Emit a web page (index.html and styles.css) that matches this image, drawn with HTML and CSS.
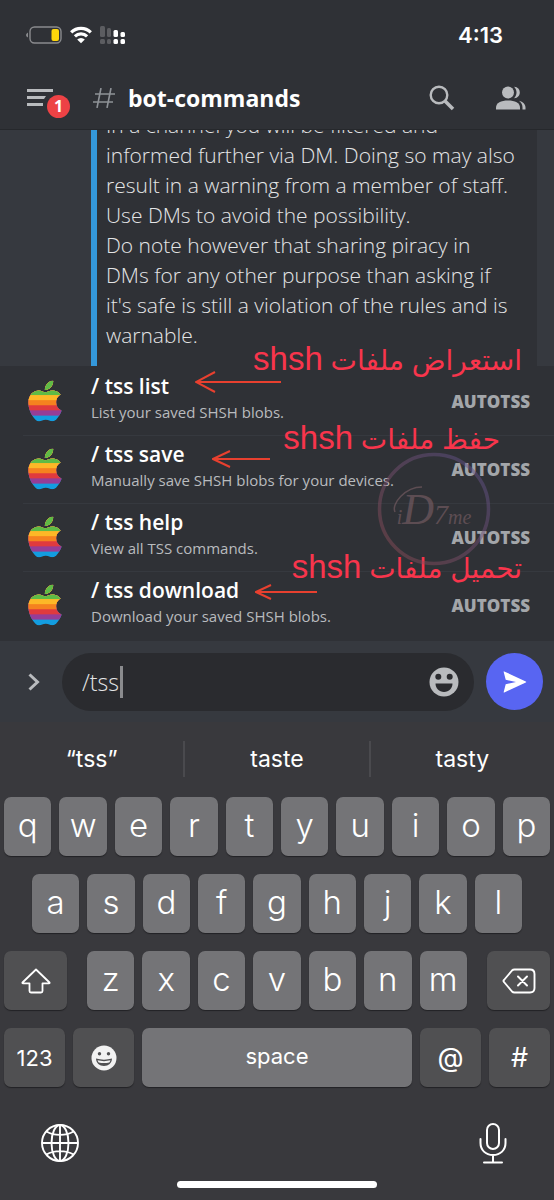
FILE: index.html
```
<!DOCTYPE html>
<html lang="en">
<head>
  <meta charset="UTF-8" />
  <meta name="viewport" content="width=device-width, initial-scale=1.0"/>
  <title>bot-commands</title>
  <link rel="stylesheet" href="styles.css">
</head>
<body>
  <svg class="defs" width="0" height="0" aria-hidden="true">
    <defs>
      <clipPath id="apple-shape">
        <path d="M12.152 6.896c-.948 0-2.415-1.078-3.96-1.04-2.04.027-3.91 1.183-4.961 3.014-2.117 3.675-.546 9.103 1.519 12.09 1.013 1.454 2.208 3.09 3.792 3.039 1.52-.065 2.09-.987 3.935-.987 1.831 0 2.35.987 3.96.948 1.637-.026 2.676-1.48 3.676-2.948 1.156-1.688 1.636-3.325 1.662-3.415-.039-.013-3.182-1.221-3.22-4.857-.026-3.04 2.48-4.494 2.597-4.559-1.429-2.09-3.623-2.324-4.39-2.376-2-.156-3.675 1.09-4.61 1.09zM15.53 3.83c.843-1.012 1.4-2.427 1.245-3.83-1.207.052-2.662.805-3.532 1.818-.78.896-1.454 2.338-1.273 3.714 1.338.104 2.715-.688 3.559-1.701"/>
      </clipPath>
      <symbol id="apple" viewBox="2 0 20 24">
        <g clip-path="url(#apple-shape)">
          <rect width="24" height="24" fill="#139de0"/>
          <rect width="24" height="20.6" fill="#963d97"/>
          <rect width="24" height="17.5" fill="#e03a3e"/>
          <rect width="24" height="14.5" fill="#f5821f"/>
          <rect width="24" height="11.5" fill="#fdb827"/>
          <rect width="24" height="8.5" fill="#5ebb46"/>
        </g>
      </symbol>
    </defs>
  </svg>

  <div class="phone">
    <div class="status">
      <div class="status-icons">
        <svg width="36" height="18" viewBox="0 0 36 18">
          <path d="M2 6.500Q0 7.500 0 9T2 11.500Z" fill="#8a8b8e"/>
          <rect x="4" y="1" width="31" height="16" rx="4.500" fill="none" stroke="#8a8b8e" stroke-width="1.400"/>
          <rect x="25.500" y="3" width="7.500" height="12" rx="2" fill="#ffd60a"/>
        </svg>
        <svg width="22" height="18" viewBox="0 0 22 18" fill="none" stroke="#fff" stroke-width="3.200">
          <path d="M1.200 6.300a14 14 0 0 1 19.600 0"/>
          <path d="M4.900 10.400a8.800 8.800 0 0 1 12.200 0"/>
          <path d="M11 17.200 7.200 13.500a5.400 5.400 0 0 1 7.600 0Z" fill="#fff" stroke="none"/>
        </svg>
        <svg width="26" height="18" viewBox="0 0 26 18" fill="#fff">
          <g fill="#5c5d61">
            <rect x="0" y="0" width="5" height="11" rx="1.500"/>
            <rect x="7" y="2" width="4" height="9" rx="1.500"/>
            <rect x="0" y="13" width="5" height="5" rx="1.500"/>
            <rect x="7" y="13" width="4" height="5" rx="1.500"/>
          </g>
          <rect x="13.500" y="4" width="4.500" height="7" rx="1.500"/>
          <rect x="20.500" y="6" width="4.500" height="5" rx="1.500"/>
          <rect x="13.500" y="13" width="4.500" height="5" rx="1.500"/>
          <rect x="20.500" y="13" width="4.500" height="5" rx="1.500"/>
        </svg>
      </div>
      <span class="time">4:13</span>
    </div>

    <header class="header">
      <button class="icon-btn menu" aria-label="Menu">
        <svg width="26" height="18" viewBox="0 0 26 18" fill="#b9bbbe">
          <path d="M0 0h26v3H0zM0 7h19l-2 3H0zM0 14h16v3H0z"/>
        </svg>
        <span class="badge">1</span>
      </button>
      <svg class="hash" width="22" height="20" viewBox="0 0 22 20" fill="none" stroke="#8e9297" stroke-width="1.600">
        <path d="M8 0 4 20M18 0l-4 20M2 6h20M0 14h20"/>
      </svg>
      <h1>bot-commands</h1>
      <button class="icon-btn" aria-label="Search">
        <svg width="26" height="26" viewBox="0 0 26 26" fill="none" stroke="#b9bbbe">
          <circle cx="10" cy="10" r="8.300" stroke-width="2.400"/>
          <path d="m16 16 8 8" stroke-width="3.600"/>
        </svg>
      </button>
      <button class="icon-btn" aria-label="Members">
        <svg width="30" height="24" viewBox="0 0 30 24" fill="#b9bbbe">
          <circle cx="12" cy="6.500" r="6"/>
          <path d="M0 23.500v-2C0 17 5 14.500 12 14.500s12 2.500 12 7v2z"/>
          <path d="M18 .800c4 .200 5.800 2.800 5.800 5.700S22 12 18 12.200c3.400-3 3.400-8.400 0-11.400Z"/>
          <path d="M23 14.800c4 1 6.500 3.500 6.500 6.700v2h-3v-2c0-2.700-1.200-5-3.500-6.700Z"/>
        </svg>
      </button>
    </header>

    <main class="messages">
      <div class="embed">
        In a channel you will be filtered and<br>
        informed further via DM. Doing so may also<br>
        result in a warning from a member of staff.<br>
        Use DMs to avoid the possibility.<br>
        Do note however that sharing piracy in<br>
        DMs for any other purpose than asking if<br>
        it's safe is still a violation of the rules and is<br>
        warnable.
      </div>
    </main>

    <ul class="commands">
      <li>
        <button class="command">
          <svg class="avatar" width="34" height="42"><use href="#apple"/></svg>
          <span class="info">
            <strong>/ tss list</strong>
            <span class="desc">List your saved SHSH blobs.</span>
          </span>
          <span class="app">AUTOTSS</span>
        </button>
        <svg class="arrow arrow-list" width="86" height="22" viewBox="0 0 86 22"><path d="M86 11H1M20 1 1 11l19 10"/></svg>
        <span class="note note-list" lang="ar" dir="rtl">استعراض ملفات <span class="latin">shsh</span></span>
      </li>
      <li>
        <button class="command">
          <svg class="avatar" width="34" height="42"><use href="#apple"/></svg>
          <span class="info">
            <strong>/ tss save</strong>
            <span class="desc">Manually save SHSH blobs for your devices.</span>
          </span>
          <span class="app">AUTOTSS</span>
        </button>
        <svg class="arrow arrow-save" width="58" height="18" viewBox="0 0 58 18"><path d="M58 9H1M18 1 1 9l17 8"/></svg>
        <span class="note note-save" lang="ar" dir="rtl">حفظ ملفات <span class="latin">shsh</span></span>
      </li>
      <li>
        <button class="command">
          <svg class="avatar" width="34" height="42"><use href="#apple"/></svg>
          <span class="info">
            <strong>/ tss help</strong>
            <span class="desc">View all TSS commands.</span>
          </span>
          <span class="app">AUTOTSS</span>
        </button>
      </li>
      <li>
        <button class="command">
          <svg class="avatar" width="34" height="42"><use href="#apple"/></svg>
          <span class="info">
            <strong>/ tss download</strong>
            <span class="desc">Download your saved SHSH blobs.</span>
          </span>
          <span class="app">AUTOTSS</span>
        </button>
        <svg class="arrow arrow-download" width="62" height="16" viewBox="0 0 62 16"><path d="M62 8H1M16 1 1 8l15 7"/></svg>
        <span class="note note-download" lang="ar" dir="rtl">تحميل ملفات <span class="latin">shsh</span></span>
      </li>
      <li class="watermark" aria-hidden="true">
        <svg width="114" height="114" viewBox="0 0 114 114" fill="none">
          <defs>
            <linearGradient id="ring" x1="0" y1="1" x2="1" y2="0">
              <stop offset="0" stop-color="#8c4a4e"/>
              <stop offset="1" stop-color="#5c5390"/>
            </linearGradient>
          </defs>
          <circle cx="57" cy="57" r="54.500" stroke="url(#ring)" stroke-width="3.500"/>
          <path d="M18 60C14 52 28 35 45 35" stroke="#8c6a70" stroke-width="1.500"/>
        </svg>
        <span class="sign">i<span class="sign-big">D</span><span class="sign-mid">7</span>me</span>
      </li>
    </ul>

    <form class="composer" onsubmit="return false">
      <button class="icon-btn more" type="button" aria-label="More">
        <svg width="12" height="18" viewBox="0 0 12 18" fill="none" stroke="#b9bbbe" stroke-width="3"><path d="m1.500 1.500 8 7.500-8 7.500"/></svg>
      </button>
      <div class="field">
        <input type="text" value="/tss" aria-label="Message">
        <span class="caret"></span>
        <button class="icon-btn" type="button" aria-label="Emoji">
          <svg width="30" height="30" viewBox="0 0 30 30">
            <circle cx="15" cy="15" r="14.500" fill="#b9bbbe"/>
            <circle cx="9.300" cy="9.800" r="3" fill="#2a2b2f"/>
            <circle cx="20.700" cy="9.800" r="3" fill="#2a2b2f"/>
            <path d="M6.500 16.500h17c0 4.800-3.500 8.500-8.500 8.500s-8.500-3.700-8.500-8.500Z" fill="#2a2b2f"/>
          </svg>
        </button>
      </div>
      <button class="send" aria-label="Send">
        <svg width="24" height="22" viewBox="0 0 24 22" fill="#fff"><path d="M1.200.400Q.500.200.700 1l2 7.800L13 11 2.700 13.200.700 21q-.200.900.600.500L22.800 11.500q.900-.500 0-1Z"/></svg>
      </button>
    </form>

    <section class="keyboard">
      <div class="suggestions">
        <button>“tss”</button>
        <button>taste</button>
        <button>tasty</button>
      </div>
      <div class="keys">
        <div class="row">
          <button>q</button><button>w</button><button>e</button><button>r</button><button>t</button><button>y</button><button>u</button><button>i</button><button>o</button><button>p</button>
        </div>
        <div class="row row-middle">
          <button>a</button><button>s</button><button>d</button><button>f</button><button>g</button><button>h</button><button>j</button><button>k</button><button>l</button>
        </div>
        <div class="row row-split">
          <button class="dark wide" aria-label="Shift">
            <svg width="30" height="26" viewBox="0 0 30 26" fill="none" stroke="#fff" stroke-width="1.800" stroke-linejoin="round"><path d="M15 1.500 1.500 14.500q-.500.800.500.800h6.500V23q0 1.500 1.500 1.500h10q1.500 0 1.500-1.500v-7.700H28q1 0 .500-.800Z"/></svg>
          </button>
          <div class="letters">
            <button>z</button><button>x</button><button>c</button><button>v</button><button>b</button><button>n</button><button>m</button>
          </div>
          <button class="dark wide" aria-label="Delete">
            <svg width="34" height="26" viewBox="0 0 34 26" fill="none" stroke="#fff" stroke-width="1.900" stroke-linecap="round" stroke-linejoin="round"><path d="M12.500 1.500H28q4.500 0 4.500 4.500v14q0 4.500-4.500 4.500H12.500q-1.500 0-2.500-1L2 14q-1-1 0-2l8-9.500q1-1 2.500-1ZM16 8.500l9 9m0-9-9 9"/></svg>
          </button>
        </div>
        <div class="row">
          <button class="dark fn label">123</button>
          <button class="dark fn" aria-label="Emoji keyboard">
            <svg width="26" height="26" viewBox="0 0 26 26">
              <circle cx="13" cy="13" r="12.500" fill="#f2f2f2"/>
              <circle cx="8.500" cy="8.800" r="1.700" fill="#505052"/>
              <circle cx="17.500" cy="8.800" r="1.700" fill="#505052"/>
              <path d="M5 13.500c5 1.500 11 1.500 16 0 0 4.500-3.500 7.500-8 7.500s-8-3-8-7.500Z" fill="#505052"/>
              <path d="M6.500 15.300c4 1.100 9 1.100 13 0-.300 1-.700 1.700-1.200 2.200-3.500.800-7.100.800-10.600 0-.500-.500-.900-1.200-1.200-2.200Z" fill="#f2f2f2"/>
            </svg>
          </button>
          <button class="space label">space</button>
          <button class="dark fn symbol">@</button>
          <button class="dark fn symbol">#</button>
        </div>
      </div>
      <div class="bottom">
        <button class="icon-btn" aria-label="Next keyboard">
          <svg width="40" height="40" viewBox="0 0 40 40" fill="none" stroke="#fff" stroke-width="1.900">
            <circle cx="20" cy="20" r="18"/>
            <ellipse cx="20" cy="20" rx="8.500" ry="18"/>
            <path d="M20 2v36M2 20h36M6.500 8.500c7.500 4.500 19.500 4.500 27 0M6.500 31.500c7.500-4.500 19.500-4.500 27 0"/>
          </svg>
        </button>
        <button class="icon-btn" aria-label="Dictate">
          <svg width="28" height="42" viewBox="0 0 28 42" fill="none" stroke="#fff" stroke-width="2" stroke-linecap="round">
            <rect x="8" y="2" width="12" height="25" rx="6"/>
            <path d="M1.500 17v4c0 7 5 12 12.500 12s12.500-5 12.500-12v-4M14 33v7M5 40.500h18"/>
          </svg>
        </button>
      </div>
      <div class="home-bar"></div>
    </section>
  </div>
</body>
</html>
```

FILE: styles.css
```
* {
  box-sizing: border-box;
}

body {
  margin: 0;
  background: #2f3136;
  color: #fff;
  font-family: "Open Sans", "Noto Sans", sans-serif;
}

button {
  border: none;
  padding: 0;
  background: none;
  color: inherit;
  font-family: inherit;
  cursor: pointer;
}

svg {
  display: block;
}

.defs {
  position: absolute;
}

.phone {
  display: flex;
  flex-direction: column;
  min-height: 100vh;
}

.icon-btn {
  display: flex;
  align-items: center;
}

/* status bar */
.status {
  display: flex;
  align-items: center;
  justify-content: space-between;
  height: 70px;
  padding: 0 51px 0 26px;
  font-family: Inter, sans-serif;
}

.status-icons {
  display: flex;
  gap: 8px;
}

.time {
  font-size: 22px;
  font-weight: 600;
}

/* channel header */
.header {
  display: flex;
  align-items: center;
  height: 60px;
  padding: 0 28px 4px 27px;
  border-bottom: 1px solid #26282c;
}

.menu {
  position: relative;
}

.badge {
  position: absolute;
  left: 20px;
  top: 6px;
  width: 23px;
  height: 23px;
  border-radius: 50%;
  background: #ed4245;
  font-size: 16px;
  font-weight: 700;
  line-height: 23px;
}

.hash {
  margin-left: 40px;
}

.header h1 {
  flex: 1;
  margin: 0 0 0 13px;
  font-size: 23px;
  font-weight: 700;
}

.header .icon-btn + .icon-btn {
  margin-left: 41px;
}

/* messages */
.messages {
  flex: 1 1 0;
  display: flex;
  flex-direction: column;
  justify-content: flex-end;
  overflow: hidden;
  padding: 0 17px 0 91px;
  background: #36393f;
}

.embed {
  padding: 0 0 16px 9px;
  border-left: 6px solid #3498db;
  background: #2f3136;
  color: #e4e5e6;
  font-size: 21px;
  font-weight: 300;
  line-height: 30px;
  white-space: nowrap;
}

/* slash command list */
.commands {
  position: relative;
  margin: 0;
  padding: 1px 0 2px;
  list-style: none;
}

.commands li {
  position: relative;
}

.command {
  display: flex;
  align-items: center;
  width: 100%;
  height: 68px;
  padding: 0 24px 0 28px;
  text-align: left;
}

.commands li + li::before {
  content: "";
  position: absolute;
  left: 23px;
  right: 0;
  border-top: 1px solid #36393f;
}

.info {
  flex: 1;
  display: flex;
  flex-direction: column;
  margin-left: 29px;
  padding-bottom: 6px;
}

.info strong {
  font-size: 21px;
  font-weight: 600;
  line-height: 28px;
}

.desc {
  color: #b9bbbe;
  font-size: 15px;
  line-height: 24px;
}

.app {
  color: #a3a6aa;
  font-size: 17px;
  font-weight: 800;
}

/* red notes drawn over the list */
.note {
  position: absolute;
  color: #f8354c;
  font-family: "Liberation Sans", "DejaVu Sans", sans-serif;
  font-size: 28px;
  line-height: 40px;
  white-space: nowrap;
}

.latin {
  font-size: 33px;
}

.note-list {
  right: 32px;
  top: -28px;
}

.note-save {
  right: 54px;
  top: -17px;
}

.note-download {
  right: 32px;
  top: -24px;
}

.arrow {
  position: absolute;
  fill: none;
  stroke: #e8402f;
  stroke-width: 2;
}

.arrow-list {
  left: 195px;
  top: 4px;
}

.arrow-save {
  left: 212px;
  top: 15px;
}

.arrow-download {
  left: 255px;
  top: 13px;
}

.commands .watermark {
  position: absolute;
  left: 377px;
  top: 86px;
  opacity: 0.5;
}

.commands .watermark::before {
  content: none;
}

.sign {
  position: absolute;
  left: 0;
  right: 0;
  top: 34px;
  color: #8c6a70;
  font-family: "Liberation Serif", serif;
  font-size: 20px;
  font-style: italic;
  line-height: 48px;
  text-align: center;
}

.sign-big {
  font-size: 44px;
}

.sign-mid {
  font-size: 28px;
}

/* message box */
.composer {
  display: flex;
  align-items: center;
  height: 81px;
  padding: 0 11px 0 28px;
  background: #36393f;
}

.field {
  position: relative;
  flex: 1;
  display: flex;
  align-items: center;
  height: 58px;
  margin: 0 12px 0 22px;
  padding: 0 15px 0 20px;
  border-radius: 29px;
  background: #2a2b2f;
}

.field input {
  flex: 1;
  min-width: 0;
  padding: 0;
  border: none;
  outline: none;
  background: none;
  color: #e4e5e6;
  font-family: inherit;
  font-size: 23px;
  font-weight: 300;
}

.caret {
  position: absolute;
  left: 58px;
  width: 3px;
  height: 32px;
  background: #8a8b8e;
}

.send {
  display: flex;
  align-items: center;
  justify-content: center;
  width: 57px;
  height: 57px;
  border-radius: 50%;
  background: #5865f2;
}

/* keyboard */
.keyboard {
  padding-bottom: 12px;
  background: #39393d;
  font-family: Inter, sans-serif;
}

.suggestions {
  display: flex;
  padding: 19px 0 20px;
}

.suggestions button {
  flex: 1;
  height: 36px;
  font-size: 23px;
}

.suggestions button + button {
  border-left: 2px solid #4a4a4e;
}

.keys {
  display: flex;
  flex-direction: column;
  gap: 18px;
  padding: 0 4px;
}

.row,
.letters {
  display: flex;
  gap: 8px;
}

.row-middle {
  padding: 0 28px;
}

.row-split {
  gap: 20px;
}

.letters {
  flex: 1;
}

.keys button {
  display: flex;
  align-items: center;
  justify-content: center;
  flex: 1;
  height: 59px;
  padding-bottom: 4px;
  border-radius: 7px;
  background: #747477;
  box-shadow: 0 1px 1px #222225;
  font-size: 33px;
  font-weight: 300;
}

.keys .dark {
  padding-bottom: 0;
  background: #505052;
}

.keys .wide {
  flex: 0 0 63px;
}

.keys .fn {
  flex: 0 0 61px;
}

.keys .label {
  font-size: 22px;
  font-weight: 400;
}

.keys .symbol {
  font-size: 27px;
  font-weight: 400;
}

.bottom {
  display: flex;
  align-items: center;
  justify-content: space-between;
  padding: 35px 47px 17px 40px;
}

.home-bar {
  width: 36%;
  height: 7px;
  margin: 0 auto;
  border-radius: 4px;
  background: #fff;
}
```
